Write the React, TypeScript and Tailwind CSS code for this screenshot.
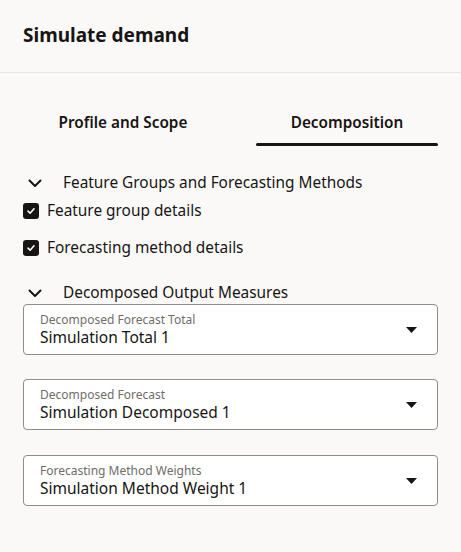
import React from "react";

const font = { fontFamily: "'Noto Sans', 'Liberation Sans', sans-serif" };

function Chevron() {
  return (
    <svg width="14" height="9" viewBox="0 0 14 9" className="shrink-0">
      <path d="M1.5 1.5 L7 7 L12.5 1.5" fill="none" stroke="#161513" strokeWidth="2" strokeLinecap="round" strokeLinejoin="round" />
    </svg>
  );
}

function Checkbox() {
  return (
    <div className="w-4 h-4 rounded-[3px] bg-[#161513] flex items-center justify-center shrink-0">
      <svg width="10" height="10" viewBox="0 0 10 10">
        <path d="M2 5.2 L4.1 7.2 L8 2.8" fill="none" stroke="#ffffff" strokeWidth="1.6" strokeLinecap="round" strokeLinejoin="round" />
      </svg>
    </div>
  );
}

function SelectBox({ label, value, className }: { label: string; value: string; className?: string }) {
  return (
    <div className={"h-[51px] rounded-[4px] border border-[#8f8c89] bg-white flex items-center pl-4 pr-[20px] " + (className ?? "")}>
      <div className="flex-1 flex flex-col pt-[1px]">
        <span className="text-[12px] leading-[14px] text-[#6f6c69]">{label}</span>
        <span className="text-[15.5px] leading-[20px] text-[#161513]">{value}</span>
      </div>
      <svg width="11" height="6" viewBox="0 0 11 6">
        <path d="M0 0 L11 0 L5.5 6 Z" fill="#161513" />
      </svg>
    </div>
  );
}

export default function App() {
  return (
    <div className="w-[461px] h-[552px] bg-[#fbf9f8] text-[#161513]" style={font}>
      <div className="h-[73px] border-b border-[#e8e6e3] flex items-center px-[23px]">
        <h1 className="text-[19px] font-bold leading-none pb-[2px]">Simulate demand</h1>
      </div>
      <div className="pl-[32px] pr-[23px] pt-[29px] flex gap-[42px]">
        <div className="w-[182px] flex flex-col">
          <div className="h-[41px] flex items-center justify-center text-[15.3px] font-semibold">Profile and Scope</div>
          <div className="h-[3px]" />
        </div>
        <div className="w-[182px] flex flex-col">
          <div className="h-[41px] flex items-center justify-center text-[15.3px] font-semibold">Decomposition</div>
          <div className="h-[3px] rounded-full bg-[#161513]" />
        </div>
      </div>
      <div className="px-[23px] flex flex-col">
        <div className="mt-[26px] h-[22px] flex items-center text-[15.4px]">
          <div className="w-[40px] pl-[5px] flex items-center"><Chevron /></div>
          <span>Feature Groups and Forecasting Methods</span>
        </div>
        <div className="mt-[5px] h-[24px] flex items-center gap-[8px] text-[15.4px]">
          <Checkbox />
          <span>Feature group details</span>
        </div>
        <div className="mt-[13px] h-[24px] flex items-center gap-[8px] text-[15.4px]">
          <Checkbox />
          <span>Forecasting method details</span>
        </div>
        <div className="mt-[22px] h-[22px] flex items-center text-[15.4px]">
          <div className="w-[40px] pl-[5px] flex items-center"><Chevron /></div>
          <span>Decomposed Output Measures</span>
        </div>
        <SelectBox label="Decomposed Forecast Total" value="Simulation Total 1" />
        <SelectBox className="mt-[24px]" label="Decomposed Forecast" value="Simulation Decomposed 1" />
        <SelectBox className="mt-[25px]" label="Forecasting Method Weights" value="Simulation Method Weight 1" />
      </div>
    </div>
  );
}
